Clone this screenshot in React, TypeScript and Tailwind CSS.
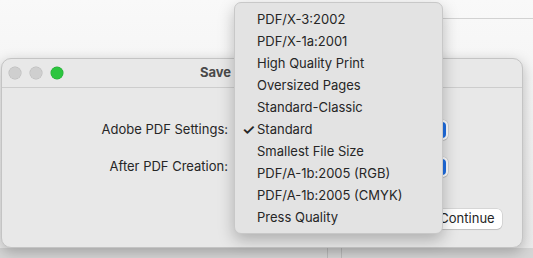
const presets = [
  'PDF/X-3:2002',
  'PDF/X-1a:2001',
  'High Quality Print',
  'Oversized Pages',
  'Standard-Classic',
  'Standard',
  'Smallest File Size',
  'PDF/A-1b:2005 (RGB)',
  'PDF/A-1b:2005 (CMYK)',
  'Press Quality',
];

function Stepper() {
  return (
    <span className="flex h-[16px] w-[16px] items-center justify-center rounded-[4px] bg-[#1f6fe5]">
      <svg width="8" height="12" viewBox="0 0 8 12" fill="none" stroke="white" strokeWidth="1.6" strokeLinecap="round" strokeLinejoin="round">
        <path d="M1.5 4.5 4 2l2.5 2.5" />
        <path d="M1.5 7.5 4 10l2.5-2.5" />
      </svg>
    </span>
  );
}

function Popup() {
  return (
    <div className="flex h-[20px] w-[212px] items-center justify-end rounded-[5px] bg-white pr-[2px] shadow-[0_0_0_0.5px_rgba(0,0,0,0.15),0_1px_1px_rgba(0,0,0,0.1)]">
      <Stepper />
    </div>
  );
}

function Light({ color }: { color: string }) {
  return <span className={`h-[12px] w-[12px] rounded-full ${color}`} />;
}

export default function App() {
  return (
    <div
      className="relative h-[258px] w-[533px] overflow-hidden bg-[#d6d6d6] text-[13px] text-[#262626]"
      style={{ fontFamily: 'Inter, "Liberation Sans", sans-serif' }}
    >
      {/* window behind the sheet */}
      <div className="h-[248px] bg-gradient-to-b from-[#f9f9f9] to-[#ececec]">
        <div className="ml-[443px] h-[19px] border-b border-[#d2d2d2]" />
      </div>
      <div className="absolute bottom-0 left-[327px] h-[10px] w-[15px] border-x border-[#bdbdbd]" />

      {/* sheet */}
      <div className="absolute left-[1px] top-[58px] flex h-[190px] w-[522px] flex-col rounded-[10px] border border-[#c4c4c4] bg-[#e8e8e8] shadow-[0_4px_14px_rgba(0,0,0,0.25)]">
        <div className="relative flex h-[29px] items-center border-b border-[#cdcdcd] px-[7px]">
          <div className="flex gap-[9px]">
            <Light color="bg-[#cfcfcf] ring-[0.5px] ring-[#b8b8b8]" />
            <Light color="bg-[#cfcfcf] ring-[0.5px] ring-[#b8b8b8]" />
            <Light color="bg-[#2cc53f] ring-[0.5px] ring-[#25a536]" />
          </div>
          <div className="absolute inset-x-0 text-center font-bold text-[#4a4a4a]">Save As Adobe PDF</div>
        </div>
        <div className="grid grid-cols-[226px_1fr] items-center gap-x-[8px] gap-y-[17px] pt-[32px]">
          <div className="text-right">Adobe PDF Settings:</div>
          <Popup />
          <div className="text-right">After PDF Creation:</div>
          <Popup />
        </div>
        <div className="mt-auto mb-[18px] flex justify-end gap-[10px] pr-[20px]">
          <div className="flex h-[20px] w-[70px] items-center justify-center rounded-[5px] bg-white shadow-[0_0_0_0.5px_rgba(0,0,0,0.15),0_1px_1px_rgba(0,0,0,0.1)]">
            Cancel
          </div>
          <div className="flex h-[20px] w-[70px] items-center justify-center rounded-[5px] bg-white shadow-[0_0_0_0.5px_rgba(0,0,0,0.15),0_1px_1px_rgba(0,0,0,0.1)]">
            Continue
          </div>
        </div>
      </div>

      {/* dropdown menu */}
      <div className="absolute left-[234px] top-[2px] w-[209px] rounded-[7px] border border-[#c8c8c8] bg-[#e3e3e3] pb-[4px] pt-[6px] shadow-[0_6px_16px_rgba(0,0,0,0.25)]">
        {presets.map((p) => (
          <div key={p} className="relative flex h-[22px] items-center pl-[22px]">
            {p === 'Standard' && <span className="absolute left-[7px] text-[15px] font-semibold">✓</span>}
            {p}
          </div>
        ))}
      </div>
    </div>
  );
}
